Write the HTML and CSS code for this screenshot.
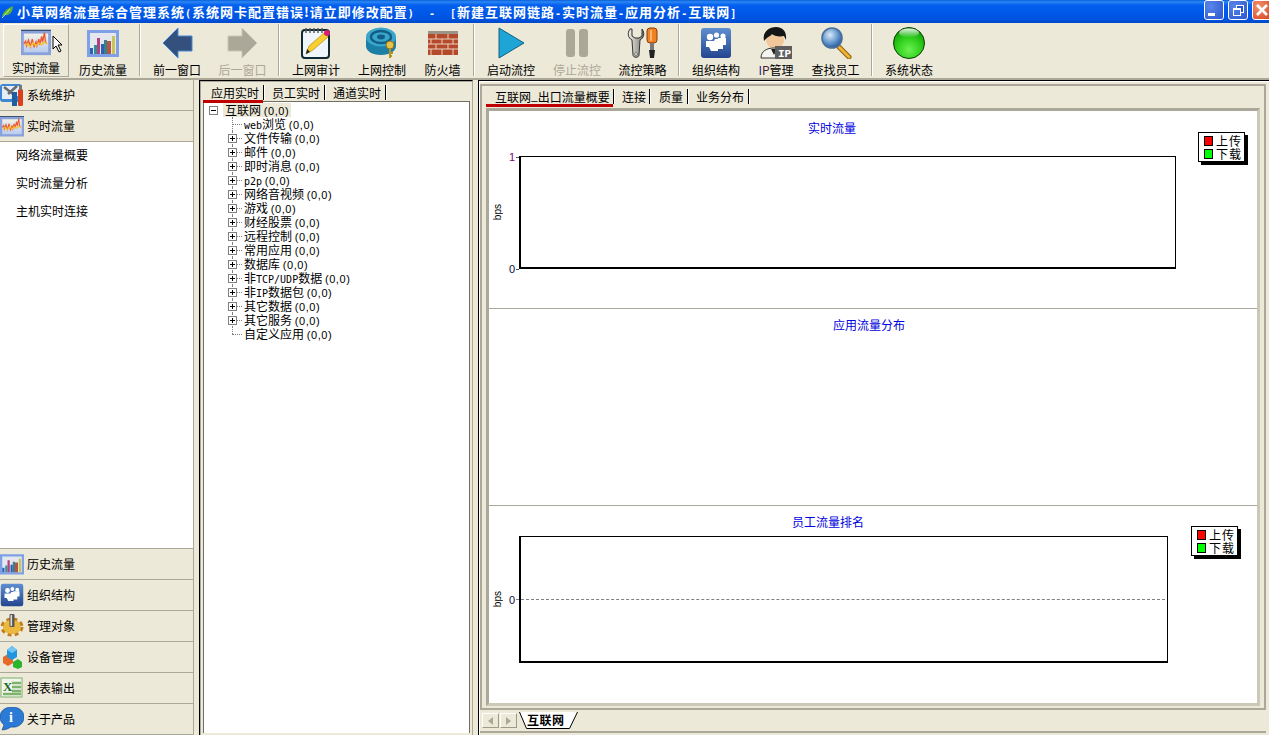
FILE: index.html
```html
<!DOCTYPE html>
<html lang="zh-CN">
<head>
    <meta charset="UTF-8">
    <title>小草网络流量综合管理系统</title>
    <link rel="stylesheet" href="styles.css">
</head>
<body>
    <!-- shared icons, used by the toolbar and the left menu -->
    <svg class="defs" width="0" height="0">
        <defs>
            <linearGradient id="orgBg" x1="0" y1="0" x2="0" y2="1"><stop offset="0" stop-color="#5f8fd0"/><stop offset="1" stop-color="#23458f"/></linearGradient>
            <linearGradient id="frameBg" x1="0" y1="0" x2="0" y2="1"><stop offset="0" stop-color="#f4f2e8"/><stop offset="1" stop-color="#b9cbf0"/></linearGradient>
            <radialGradient id="ballBg" cx="0.5" cy="0.72" r="0.7"><stop offset="0" stop-color="#6cf050"/><stop offset="0.55" stop-color="#2fd01c"/><stop offset="1" stop-color="#0f9a08"/></radialGradient>
            <linearGradient id="ballTop" x1="0" y1="0" x2="0" y2="1"><stop offset="0" stop-color="#fff" stop-opacity=".9"/><stop offset="1" stop-color="#fff" stop-opacity="0"/></linearGradient>
            <radialGradient id="lensBg" cx="0.4" cy="0.35" r="0.7"><stop offset="0" stop-color="#dbe9f7"/><stop offset="0.6" stop-color="#5d94cc"/><stop offset="1" stop-color="#234f90"/></radialGradient>
            <linearGradient id="silver" x1="0" y1="0" x2="1" y2="0"><stop offset="0" stop-color="#f2f0ea"/><stop offset="1" stop-color="#77756d"/></linearGradient>
            <symbol id="i-rt" viewBox="0 0 32 32">
                <rect x="0" y="3" width="32" height="27" fill="#8aa2dc"/>
                <rect x="0" y="3" width="32" height="1" fill="#25314f"/>
                <rect x="3" y="7" width="26" height="20" fill="url(#frameBg)"/>
                <path d="M3 18l2-3 1 5 2-6 2 7 2-8 2 8 2-5 1 4 2-7 1 6 2-9 1 6 2-10 1 9 1 3" fill="none" stroke="#f0562a" stroke-width="1.4"/>
                <path d="M4 20l3-2 3 3 3-4 3 3 3-3 3 2 3-3 3 2" fill="none" stroke="#f7c02e" stroke-width="1.6"/>
            </symbol>
            <symbol id="i-hist" viewBox="0 0 32 32">
                <rect x="0" y="3" width="32" height="27" fill="#7fa0e6"/>
                <rect x="3" y="6" width="26" height="21" fill="#e4e8ee"/>
                <rect x="3" y="21" width="3" height="6" fill="#2d5fb4"/>
                <rect x="7" y="18" width="3" height="9" fill="#2f8f9a"/>
                <rect x="10" y="11" width="3" height="16" fill="#b0407f"/>
                <rect x="14" y="17" width="3" height="10" fill="#2d5fb4"/>
                <rect x="17" y="13" width="3" height="14" fill="#3a7f8c"/>
                <rect x="20" y="14" width="4" height="13" fill="#b4553f"/>
                <rect x="25" y="9" width="3" height="18" fill="#c9c455"/>
            </symbol>
            <symbol id="i-org" viewBox="0 0 32 32">
                <rect x="1" y="1" width="30" height="30" rx="3" fill="url(#orgBg)"/>
                <circle cx="23" cy="9" r="2.6" fill="#fff"/>
                <circle cx="16.5" cy="8" r="2.6" fill="#fff"/>
                <circle cx="10" cy="10" r="3.2" fill="#fff"/>
                <path d="M6 14h8l1-2h3v-1h8v7h-3v4h-5v2h-7l-2-4H6z" fill="#fff"/>
            </symbol>
        </defs>
    </svg>

    <div class="titlebar">
        <svg class="app-icon" width="12" height="14" viewBox="0 0 12 14"><path d="M0 11C2 5 7 3 11 1c0 5-3 10-8 9z" fill="#5cb52e"/><path d="M0 13L8 4" stroke="#d6e8a0" fill="none"/></svg>
        <span class="title-text">小草网络流量综合管理系统<b class="lat">(</b>系统网卡配置错误!请立即修改配置<b class="lat">)  -  [</b>新建互联网链路<b class="lat">-</b>实时流量<b class="lat">-</b>应用分析<b class="lat">-</b>互联网<b class="lat">]</b></span>
        <div class="win-btns">
            <span class="win-btn"><i class="min-mark"></i></span>
            <span class="win-btn"><i class="restore-mark"></i></span>
            <span class="win-btn win-close">
                <svg width="15" height="15" viewBox="0 0 15 15"><path d="M2 2l10 10M12 2L2 12" stroke="#fff" stroke-width="2.6"/></svg>
            </span>
        </div>
    </div>

    <div class="toolbar">
        <div class="tool tool-on">
            <svg class="tool-icon" viewBox="0 0 32 32"><use href="#i-rt"/></svg>
            <span>实时流量</span>
            <svg class="cursor" width="12" height="18" viewBox="0 0 12 18"><path d="M1 1v13l3-3 3 6 2-1-3-6h4z" fill="#fff" stroke="#000"/></svg>
        </div>
        <div class="tool">
            <svg class="tool-icon" viewBox="0 0 32 32"><use href="#i-hist"/></svg>
            <span>历史流量</span>
        </div>
        <i class="tool-sep"></i>
        <div class="tool">
            <svg class="tool-icon" viewBox="0 0 32 32"><path d="M2 16L17 1v8h14v15H17v7z" fill="#34507c" stroke="#4b87d6"/></svg>
            <span>前一窗口</span>
        </div>
        <div class="tool tool-off tool-w65">
            <svg class="tool-icon" viewBox="0 0 32 32"><path d="M30 16L15 1v8H1v15h14v7z" fill="#aca899" stroke="#c9c6b6"/></svg>
            <span>后一窗口</span>
        </div>
        <i class="tool-sep"></i>
        <div class="tool">
            <svg class="tool-icon" viewBox="0 0 32 32">
                <rect x="2" y="3" width="27" height="28" rx="3" fill="#eef6fb" stroke="#0d2a33" stroke-width="2"/>
                <path d="M6 1v5M10 1v5M14 1v5M18 1v5M22 1v5" stroke="#555" stroke-width="1.4"/>
                <path d="M6 27l3-8L24 6l4 4-15 13z" fill="#f7cf2e" stroke="#b88a12" stroke-width=".7"/>
                <path d="M6 27l1-5 3 3z" fill="#222"/>
                <circle cx="27" cy="6" r="3" fill="#d81f6f"/>
            </svg>
            <span>上网审计</span>
        </div>
        <div class="tool">
            <svg class="tool-icon" viewBox="0 0 32 32">
                <path d="M0 10v9c0 5 6 9 15 9s15-4 15-9v-9z" fill="#1c7fa5"/>
                <ellipse cx="15" cy="10" rx="15" ry="9.5" fill="#3aa6cc"/>
                <ellipse cx="15" cy="10" rx="10" ry="6" fill="none" stroke="#125f85" stroke-width="2.4"/>
                <ellipse cx="15" cy="10" rx="4" ry="2.4" fill="#125f85"/>
                <circle cx="24" cy="18" r="4" fill="#e8c14a" stroke="#8e6f18"/>
                <path d="M24 21v10M24 26h3M24 29h2" stroke="#b8911f" stroke-width="2"/>
            </svg>
            <span>上网控制</span>
        </div>
        <div class="tool tool-w55">
            <svg class="tool-icon" viewBox="0 0 32 32">
                <rect x="1" y="4" width="30" height="24" fill="#b5492c"/>
                <rect x="1" y="4" width="30" height="3" fill="#9a9489"/>
                <path d="M1 12h30M1 17h30M1 22h30M9 7v5M21 7v5M4 12v5M15 12v5M26 12v5M9 17v5M21 17v5M4 22v6M15 22v6M26 22v6" stroke="#e9d4bc" stroke-width="1"/>
            </svg>
            <span>防火墙</span>
        </div>
        <i class="tool-sep"></i>
        <div class="tool">
            <svg class="tool-icon" viewBox="0 0 32 32"><path d="M4 1l25 15L4 31z" fill="#1ea5d5" stroke="#14607f" stroke-linejoin="round"/></svg>
            <span>启动流控</span>
        </div>
        <div class="tool tool-off">
            <svg class="tool-icon" viewBox="0 0 32 32"><rect x="5" y="2" width="9" height="28" rx="3" fill="#aca899"/><rect x="18" y="2" width="9" height="28" rx="3" fill="#aca899"/></svg>
            <span>停止流控</span>
        </div>
        <div class="tool tool-w65">
            <svg class="tool-icon" viewBox="0 0 32 32">
                <path d="M3 2C0 6 1 11 5 13l1 15c0 3 6 3 6 0l1-15c4-2 5-7 2-11v7l-3 2H8L5 9V2z" fill="url(#silver)" stroke="#333" stroke-width="1"/>
                <circle cx="9" cy="27" r="1.4" fill="#fff" stroke="#333" stroke-width=".6"/>
                <rect x="20" y="1" width="10" height="15" rx="3" fill="#f08020" stroke="#8a3d08"/>
                <path d="M24 3v11" stroke="#fbc890" stroke-width="1.5"/>
                <rect x="23" y="16" width="4" height="8" fill="#777"/>
                <path d="M22 23h6l-1 8h-4z" fill="#222"/>
            </svg>
            <span>流控策略</span>
        </div>
        <i class="tool-sep"></i>
        <div class="tool">
            <svg class="tool-icon" viewBox="0 0 32 32"><use href="#i-org"/></svg>
            <span>组织结构</span>
        </div>
        <div class="tool tool-w54">
            <svg class="tool-icon" viewBox="0 0 32 32">
                <ellipse cx="15" cy="13" rx="9" ry="9" fill="#f2c79a"/>
                <path d="M4 14C2 4 10 0 16 0c7 0 11 5 10 13l-2-4c-5 1-10 0-12-2-1 2-5 3-8 7z" fill="#151515"/>
                <path d="M1 31c0-7 6-10 13-10s12 3 12 10z" fill="#f5f5f0" stroke="#333"/>
                <path d="M11 22l3 6 3-6z" fill="#222"/>
                <rect x="15" y="19" width="17" height="13" fill="#5e5e5e"/>
                <text class="ip-tag" x="18" y="30">IP</text>
            </svg>
            <span><b class="ip-i">I</b><b class="ip-p">P</b>管理</span>
        </div>
        <div class="tool tool-w65">
            <svg class="tool-icon" viewBox="0 0 32 32">
                <path d="M19 20l10 10" stroke="#8a5d10" stroke-width="5" stroke-linecap="round"/>
                <path d="M19 20l10 10" stroke="#efb530" stroke-width="3" stroke-linecap="round"/>
                <circle cx="12" cy="11" r="10" fill="url(#lensBg)" stroke="#4b6f96" stroke-width="1.6"/>
            </svg>
            <span>查找员工</span>
        </div>
        <i class="tool-sep"></i>
        <div class="tool">
            <svg class="tool-icon" viewBox="0 0 32 32">
                <circle cx="16" cy="16" r="15.5" fill="url(#ballBg)" stroke="#0b3d07"/>
                <ellipse cx="16" cy="6" rx="10" ry="4.5" fill="url(#ballTop)"/>
            </svg>
            <span>系统状态</span>
        </div>
    </div>

    <div class="workspace">
        <aside class="sidebar">
            <div class="side-item">
                <svg class="side-icon" viewBox="0 0 24 24">
                    <rect x="0" y="1" width="22" height="18" rx="3" fill="#3f86d4"/>
                    <path d="M2 3h18v9l-9 4H2z" fill="#e3eef9"/>
                    <path d="M4 4l9 7M17 3l-9 8" stroke="#6b6b6b" stroke-width="2.6"/>
                    <rect x="12" y="9" width="5" height="14" fill="#1f5f9e"/>
                    <rect x="18" y="6" width="5" height="17" rx="1.5" fill="#d8401f"/>
                    <rect x="19" y="2" width="3" height="5" fill="#777"/>
                </svg>
                <span>系统维护</span>
            </div>
            <div class="side-item side-open">
                <svg class="side-icon" viewBox="0 0 32 32"><use href="#i-rt"/></svg>
                <span>实时流量</span>
            </div>
            <ul class="side-list">
                <li>网络流量概要</li>
                <li>实时流量分析</li>
                <li>主机实时连接</li>
            </ul>
            <div class="side-item">
                <svg class="side-icon" viewBox="0 0 32 32"><use href="#i-hist"/></svg>
                <span>历史流量</span>
            </div>
            <div class="side-item">
                <svg class="side-icon" viewBox="0 0 32 32"><use href="#i-org"/></svg>
                <span>组织结构</span>
            </div>
            <div class="side-item">
                <svg class="side-icon" viewBox="0 0 24 24">
                    <ellipse cx="12" cy="13" rx="9" ry="7" fill="#e3ac33" stroke="#c47a18" stroke-width="5" stroke-dasharray="3.5 3"/>
                    <ellipse cx="12" cy="13" rx="9" ry="7" fill="#ecb93f"/>
                    <rect x="9.5" y="0" width="5" height="13" rx="1" fill="#555"/>
                    <rect x="10.5" y="1" width="1.6" height="11" fill="#ddd"/>
                </svg>
                <span>管理对象</span>
            </div>
            <div class="side-item">
                <svg class="side-icon" viewBox="0 0 24 24">
                    <path d="M3 12l5-3 5 3v6l-5 3-5-3z" fill="#e8682a"/>
                    <path d="M13 17l5-3 4 3v5l-4 2-5-2z" fill="#2cb52c"/>
                    <path d="M7 5l5-4 5 4v7l-5 3-5-3z" fill="#1f94e0"/>
                    <path d="M7 5l5 3 5-3-5-4z" fill="#72c4f5"/>
                </svg>
                <span>设备管理</span>
            </div>
            <div class="side-item">
                <svg class="side-icon" viewBox="0 0 24 24">
                    <rect x="1" y="2" width="21" height="19" fill="#f1f5ec" stroke="#7fae6c"/>
                    <path d="M12 7h9M12 11h9M12 15h9M3 18h18" stroke="#7fb26a" stroke-width="2.4"/>
                    <text class="xl-tag" x="3" y="15">X</text>
                </svg>
                <span>报表输出</span>
            </div>
            <div class="side-item">
                <svg class="side-icon" viewBox="0 0 24 24">
                    <path d="M12 0C5 0 0 4 0 10c0 4 2 6 4 8l-2 5c4 0 7-2 9-3 8 1 13-4 13-10S19 0 12 0z" fill="#2a7ad6" stroke="#0d3f86" stroke-width=".6"/>
                    <text class="info-tag" x="9" y="15">i</text>
                </svg>
                <span>关于产品</span>
            </div>
        </aside>

        <section class="tree-pane">
            <div class="tabs tree-tabs">
                <span class="tab tab-on">应用实时</span>
                <span class="tab">员工实时</span>
                <span class="tab">通道实时</span>
            </div>
            <div class="tree">
                <div class="tree-root"><i class="exp exp-minus"></i><span class="root-label">互联网 <em>(0,0)</em></span></div>
                <ul class="tree-kids">
                    <li class="leaf"><b class="mono">web</b>浏览 <em>(0,0)</em></li>
                    <li><i class="exp"></i>文件传输 <em>(0,0)</em></li>
                    <li><i class="exp"></i>邮件 <em>(0,0)</em></li>
                    <li><i class="exp"></i>即时消息 <em>(0,0)</em></li>
                    <li><i class="exp"></i><b class="mono">p2p</b> <em>(0,0)</em></li>
                    <li><i class="exp"></i>网络音视频 <em>(0,0)</em></li>
                    <li><i class="exp"></i>游戏 <em>(0,0)</em></li>
                    <li><i class="exp"></i>财经股票 <em>(0,0)</em></li>
                    <li><i class="exp"></i>远程控制 <em>(0,0)</em></li>
                    <li><i class="exp"></i>常用应用 <em>(0,0)</em></li>
                    <li><i class="exp"></i>数据库 <em>(0,0)</em></li>
                    <li><i class="exp"></i>非<b class="mono">TCP/UDP</b>数据 <em>(0,0)</em></li>
                    <li><i class="exp"></i>非<b class="mono">IP</b>数据包 <em>(0,0)</em></li>
                    <li><i class="exp"></i>其它数据 <em>(0,0)</em></li>
                    <li><i class="exp"></i>其它服务 <em>(0,0)</em></li>
                    <li class="leaf">自定义应用 <em>(0,0)</em></li>
                </ul>
            </div>
        </section>

        <section class="main-pane">
            <div class="main-frame">
                <div class="tabs main-tabs">
                    <span class="tab tab-on tab-wide">互联网<b class="under">_</b>出口流量概要</span>
                    <span class="tab tab-short">连接</span>
                    <span class="tab tab-short tab-short2">质量</span>
                    <span class="tab">业务分布</span>
                </div>
                <div class="charts">
                    <div class="chart chart-flow">
                        <h3 class="chart-title">实时流量</h3>
                        <div class="chart-row">
                            <div class="y-axis">
                                <span class="y-name">bps</span>
                                <span class="y-ticks"><b class="tick-top">1</b><b>0</b></span>
                            </div>
                            <div class="plot"></div>
                        </div>
                        <div class="legend">
                            <div><i class="swatch swatch-up"></i>上传</div>
                            <div><i class="swatch swatch-down"></i>下载</div>
                        </div>
                    </div>
                    <div class="chart chart-apps">
                        <h3 class="chart-title">应用流量分布</h3>
                    </div>
                    <div class="chart chart-staff">
                        <h3 class="chart-title">员工流量排名</h3>
                        <div class="chart-row">
                            <div class="y-axis">
                                <span class="y-name">bps</span>
                                <span class="y-ticks y-mid"><b>0</b></span>
                            </div>
                            <div class="plot plot-staff"><i class="zero-line"></i></div>
                        </div>
                        <div class="legend">
                            <div><i class="swatch swatch-up"></i>上传</div>
                            <div><i class="swatch swatch-down"></i>下载</div>
                        </div>
                    </div>
                </div>
            </div>
            <div class="sheet-bar">
                <span class="sheet-btn"><i class="tri tri-left"></i></span>
                <span class="sheet-btn"><i class="tri tri-right"></i></span>
                <div class="sheet-tab">
                    <svg width="60" height="17" viewBox="0 0 60 17"><path d="M0.5 0L7.5 16.5H50.5L58.5 0" fill="#fff" stroke="#000"/></svg>
                    <span>互联网</span>
                </div>
            </div>
        </section>
    </div>
</body>
</html>
```

FILE: styles.css
```css
* {
    margin: 0;
    padding: 0;
    box-sizing: border-box;
}

html, body {
    width: 1269px;
    height: 735px;
    overflow: hidden;
}

body {
    display: flex;
    flex-direction: column;
    background: #ece9d8;
    color: #000;
    font-family: "Noto Sans CJK SC", "Liberation Sans", sans-serif;
    font-size: 12px;
}

.defs {
    position: absolute;
}

/* title bar */
.titlebar {
    height: 23px;
    flex: none;
    display: flex;
    align-items: center;
    padding-left: 2px;
    background: linear-gradient(180deg, #0a5fd8 0%, #2a86f5 8%, #0560ee 22%, #0058e8 55%, #0053e0 85%, #0048c8 100%);
    color: #fff;
}

.app-icon {
    flex: none;
    margin-right: 3px;
}

.title-text {
    font-weight: 700;
    font-size: 13px;
    letter-spacing: 1px;
    white-space: pre;
    line-height: 20px;
}

.lat {
    font: 700 10px "DejaVu Sans Mono", monospace;
}

.win-btns {
    margin-left: auto;
    align-self: flex-start;
    display: flex;
    gap: 4px;
    margin-right: -3px;
}

.win-btn {
    width: 20px;
    height: 20px;
    border: 1px solid #fff;
    border-radius: 3px;
    background: radial-gradient(circle at 30% 30%, #5a86e8, #2a55d0);
    display: flex;
    align-items: center;
    justify-content: center;
    position: relative;
}

.win-close {
    background: radial-gradient(circle at 30% 30%, #f09070, #d8431c);
}

.min-mark {
    width: 7px;
    height: 3px;
    background: #fff;
    margin: 8px 6px 0 0;
}

.restore-mark {
    width: 8px;
    height: 8px;
    border: 1px solid #fff;
    border-top-width: 2px;
    margin: 3px 2px 0 0;
    box-shadow: 3px -3px 0 -1px #2a55d0, 3px -3px 0 0 #fff;
}

/* toolbar */
.toolbar {
    height: 57px;
    flex: none;
    display: flex;
    padding: 1px 0 0 4px;
    border-bottom: 2px solid #aca899;
}

.tool {
    position: relative;
    width: 66px;
    height: 54px;
    display: flex;
    flex-direction: column;
    align-items: center;
    padding-top: 3px;
    line-height: 16px;
}

.tool-w65 {
    width: 65px;
}

.tool-w55 {
    width: 55px;
}

.tool-w54 {
    width: 54px;
}

.tool-icon {
    width: 32px;
    height: 32px;
    margin-bottom: 3px;
}

.tool-on {
    height: 53px;
    margin-left: -1px;
    margin-right: 1px;
    border: 1px solid;
    border-color: #fff #aca899 #aca899 #fff;
    padding-top: 2px;
}

.tool-off {
    color: #aca899;
}

.tool-sep {
    flex: none;
    width: 2px;
    height: 52px;
    margin: 0 3px;
    background: linear-gradient(90deg, #aca899 50%, #fff 50%);
}

.cursor {
    position: absolute;
    left: 48px;
    top: 10px;
}

.ip-i {
    font-weight: 400;
    color: #1a1a8c;
}

.ip-p {
    font-weight: 400;
    color: #4a1a3a;
}

.ip-tag {
    font: 700 11px "Liberation Mono", monospace;
    fill: #fff;
}

.xl-tag {
    font: 700 13px "Liberation Serif", serif;
    fill: #1c6b23;
}

.info-tag {
    font: 700 14px "Liberation Serif", serif;
    fill: #fff;
}

/* workspace */
.workspace {
    flex: 1;
    min-height: 0;
    display: flex;
}

.sidebar {
    width: 194px;
    flex: none;
    display: flex;
    flex-direction: column;
    border-right: 1px solid #aca899;
}

.side-item {
    height: 31px;
    flex: none;
    display: flex;
    align-items: center;
    gap: 3px;
    border-bottom: 1px solid #aca899;
}

.side-item span {
    padding-bottom: 2px;
}

.side-icon {
    width: 24px;
    height: 24px;
    flex: none;
}

.side-list {
    flex: 1;
    list-style: none;
    background: #fff;
    border-bottom: 1px solid #aca899;
}

.side-list li {
    height: 28px;
    line-height: 26px;
    padding-left: 16px;
}

/* tree pane */
.tree-pane {
    width: 274px;
    flex: none;
    margin-left: 5px;
    display: flex;
    flex-direction: column;
    border-top: 1px solid #000;
    border-left: 1px solid #000;
    border-right: 1px solid #aca899;
    box-shadow: inset 1px 1px 0 #aca899;
    padding: 3px 2px 2px 3px;
}

.tabs {
    display: flex;
    height: 17px;
    flex: none;
    line-height: 15px;
}

.tab {
    width: 61px;
    padding-left: 8px;
    border-right: 1px solid #000;
    height: 15px;
    margin-top: 1px;
    box-shadow: 1px 0 0 #fff;
    position: relative;
}

.tab-on::after {
    content: "";
    position: absolute;
    left: 0;
    right: 0;
    top: 15px;
    height: 3px;
    background: #c00000;
}

.under {
    font-weight: 400;
    line-height: 0;
    vertical-align: 2px;
}

.tree {
    flex: 1;
    background: #fff;
    border: 1px solid #716f64;
    border-width: 1px 1px 0;
    line-height: 14px;
    padding-top: 1px;
}

.tree em {
    font: 11px/14px "Liberation Sans", sans-serif;
    letter-spacing: 0.6px;
}

.mono {
    font: 10px/14px "DejaVu Sans Mono", monospace;
}

.tree-root {
    height: 14px;
    padding-left: 19px;
    position: relative;
}

.root-label {
    display: inline-block;
    background: #ece9d8;
    padding: 0 2px;
    height: 14px;
}

.tree-kids {
    list-style: none;
    margin-left: 28px;
}

.tree-kids li {
    position: relative;
    height: 14px;
    padding-left: 12px;
    white-space: nowrap;
}

.tree-kids li::before {
    content: "";
    position: absolute;
    left: 0;
    top: 0;
    height: 14px;
    border-left: 1px dotted #808080;
}

.tree-kids li:last-child::before {
    height: 7px;
}

.tree-kids li::after {
    content: "";
    position: absolute;
    left: 0;
    top: 7px;
    width: 10px;
    border-top: 1px dotted #808080;
}

.exp {
    position: absolute;
    left: -4px;
    top: 3px;
    width: 9px;
    height: 9px;
    border: 1px solid #808080;
    background: linear-gradient(#000, #000) center / 5px 1px no-repeat, linear-gradient(#000, #000) center / 1px 5px no-repeat, #fff;
    z-index: 1;
}

.exp-minus {
    left: 5px;
    background: linear-gradient(#000, #000) center / 5px 1px no-repeat, #fff;
}

/* main pane */
.main-pane {
    flex: 1;
    min-width: 0;
    margin-left: 5px;
    display: flex;
    flex-direction: column;
    border-top: 1px solid #000;
    border-left: 1px solid #000;
    box-shadow: inset 1px 1px 0 #fff;
    padding: 3px 3px 2px 1px;
}

.main-frame {
    flex: 1;
    min-height: 0;
    display: flex;
    flex-direction: column;
    border: 2px solid #aca899;
    padding: 2px 4px 2px 4px;
}

.main-tabs {
    height: 20px;
}

.tab-wide {
    width: 128px;
    padding-left: 9px;
}

.tab-short {
    width: 36px;
}

.tab-short2 {
    width: 38px;
    padding-left: 9px;
}

.charts {
    flex: 1;
    min-height: 0;
    background: #fff;
    border: 3px solid;
    border-color: #aca899 #cbc8b8 #cbc8b8 #aca899;
    display: flex;
    flex-direction: column;
}

.chart {
    position: relative;
    height: 197px;
    flex: none;
    border-bottom: 1px solid #aca899;
}

.chart-flow {
    height: 198px;
}

.chart-staff {
    flex: 1;
    border-bottom: 0;
}

.chart-title {
    font-size: 12px;
    font-weight: 400;
    color: #0000e0;
    line-height: 14px;
    padding-top: 10px;
    text-align: center;
    width: 686px;
}

.chart-apps .chart-title {
    width: 760px;
    padding-top: 9px;
}

.chart-staff .chart-title {
    width: 678px;
    padding-top: 9px;
}

.chart-row {
    display: flex;
    margin-top: 21px;
}

.chart-staff .chart-row {
    margin-top: 7px;
}

.y-axis {
    width: 30px;
    height: 112px;
    flex: none;
    display: flex;
    justify-content: space-between;
    padding-left: 4px;
}

.chart-staff .y-axis {
    height: 127px;
}

.y-name {
    writing-mode: vertical-rl;
    transform: rotate(180deg);
    align-self: center;
    font: 10px/10px "Liberation Sans", sans-serif;
}

.y-ticks {
    display: flex;
    flex-direction: column;
    justify-content: space-between;
    width: 13px;
    margin: -5px 0 -7px;
    font: 400 11px/12px "Liberation Sans", sans-serif;
}

.y-ticks b {
    display: flex;
    justify-content: flex-end;
    align-items: center;
    gap: 1px;
    font-weight: 400;
    color: #0a0a3c;
}

.y-ticks b::after {
    content: "";
    width: 3px;
    height: 1px;
    background: #555;
}

.y-ticks .tick-top {
    color: #800080;
}

.y-mid {
    justify-content: center;
    margin-top: 0;
    margin-bottom: 0;
}

.y-mid b::after {
    background: transparent;
}

.plot {
    width: 657px;
    height: 113px;
    border: 1px solid #000;
    border-left-width: 2px;
    border-bottom-width: 2px;
}

.plot-staff {
    width: 649px;
    height: 127px;
    display: flex;
    align-items: center;
}

.zero-line {
    display: block;
    flex: none;
    width: calc(100% + 3px);
    margin-left: -5px;
    border-top: 1px dashed #808080;
}

.legend {
    position: absolute;
    left: 709px;
    top: 21px;
    width: 47px;
    height: 30px;
    padding: 1px 0 0 5px;
    border: 1px solid #000;
    background: #fff;
    box-shadow: 3px 3px 0 #000;
    line-height: 13px;
    letter-spacing: 1px;
}

.chart-staff .legend {
    left: 702px;
    top: 20px;
}

.legend div {
    display: flex;
    align-items: center;
    height: 13px;
}

.swatch {
    width: 9px;
    height: 10px;
    margin-right: 3px;
    border: 1px solid #000;
}

.swatch-up {
    background: #f00;
}

.swatch-down {
    background: #0f0;
}

/* sheet tabs under the charts */
.sheet-bar {
    height: 23px;
    flex: none;
    display: flex;
    align-items: flex-start;
    gap: 1px;
    padding: 2px 0 0 2px;
    border-bottom: 2px solid #aca899;
}

.sheet-btn {
    width: 17px;
    height: 15px;
    margin-top: 1px;
    border: 1px solid;
    border-color: #fff #9d9a8a #9d9a8a #fff;
    display: flex;
    align-items: center;
    justify-content: center;
}

.tri {
    width: 0;
    height: 0;
    border-top: 4px solid transparent;
    border-bottom: 4px solid transparent;
}

.tri-left {
    border-right: 5px solid #aca899;
}

.tri-right {
    border-left: 5px solid #aca899;
}

.sheet-tab {
    position: relative;
    width: 60px;
    height: 17px;
    margin-left: 1px;
}

.sheet-tab svg {
    position: absolute;
    left: 0;
    top: 0;
}

.sheet-tab span {
    position: relative;
    display: block;
    padding-left: 8px;
    font-weight: 700;
    line-height: 16px;
    letter-spacing: 0.5px;
}
```
